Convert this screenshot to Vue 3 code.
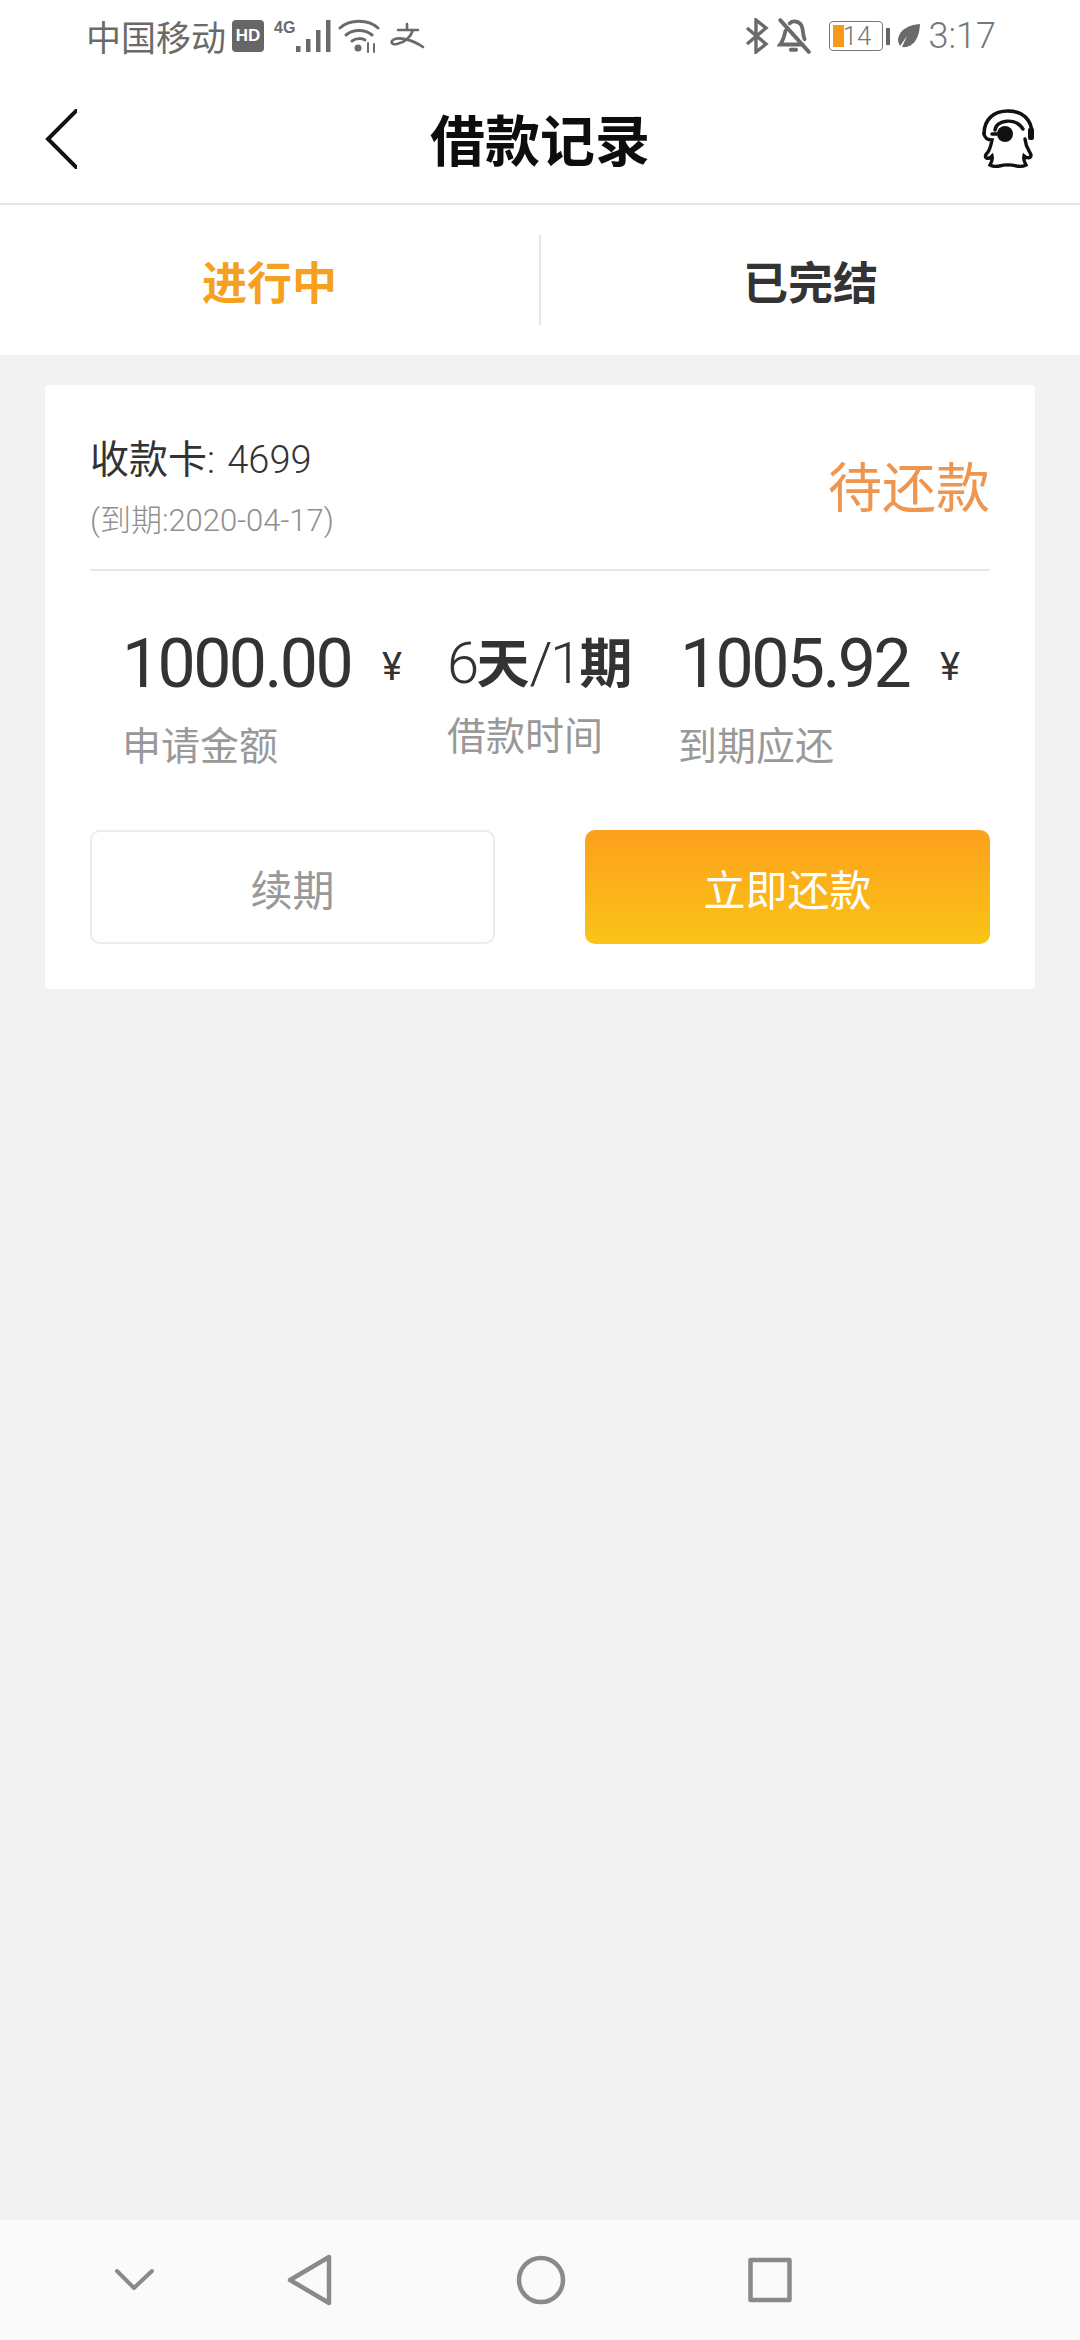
<script setup>
const stats = [
  { value: "1000.00", label: "申请金额" },
  { value: "1005.92", label: "到期应还" },
];
</script>

<template>
  <div class="page">
    <div class="status">
      <div class="status-left">
        <span class="carrier">中国移动</span>
        <span class="hd">HD</span>
        <span class="net">4G</span>
        <svg class="signal" width="38" height="34" viewBox="0 0 38 34">
          <rect x="1" y="27" width="4.5" height="6" fill="#6a6a6a" />
          <rect x="11" y="20" width="4.5" height="13" fill="#6a6a6a" />
          <rect x="21" y="11" width="4.5" height="22" fill="#6a6a6a" />
          <rect x="31" y="1" width="4.5" height="32" fill="#6a6a6a" />
        </svg>
        <svg class="wifi" width="42" height="34" viewBox="0 0 42 34" fill="none" stroke="#6a6a6a" stroke-width="3" stroke-linecap="round">
          <path d="M2 9C12 0 30 0 40 9" />
          <path d="M8 16C15 10 27 10 34 16" />
          <path d="M14 22C18 19 24 19 27 21" />
          <circle cx="20" cy="29" r="3.5" fill="#6a6a6a" stroke="none" />
          <path d="M30 24v9M36 25v8" stroke-width="2" />
        </svg>
        <svg class="alipay" width="36" height="28" viewBox="0 0 36 28" fill="none" stroke="#6a6a6a" stroke-width="2.6" stroke-linecap="round">
          <path d="M9 8H29M18 2V8M24 8C22 14 17 20 8 22C3 23 1 20 4 18C9 14 24 18 34 25" />
        </svg>
      </div>
      <div class="status-right">
        <svg width="24" height="36" viewBox="0 0 24 36" fill="none" stroke="#6a6a6a" stroke-width="3.4">
          <path d="M2 10L21 26L11 34V2L21 10L2 26" />
        </svg>
        <svg class="bell" width="34" height="36" viewBox="0 0 32 34" fill="none" stroke="#6a6a6a" stroke-width="3.6" stroke-linecap="round">
          <path d="M8 12C7 17 6 21 3 25H24M12 5C15 2 21 3 23 7C25 11 24 16 26 20" />
          <path d="M3 2L30 32" />
          <path d="M13 30H18" />
        </svg>
        <div class="battery">
          <i class="battery-fill"></i>
          <span>14</span>
        </div>
        <i class="battery-cap"></i>
        <svg class="leaf" width="24" height="26" viewBox="0 0 24 26">
          <path d="M23 1C12 2 3 6 1 16C1 19 2 21 3 23L10 13L5 24C12 25 22 21 23 1Z" fill="#6a6a6a" />
        </svg>
        <span class="time">3:17</span>
      </div>
    </div>

    <header class="header">
      <svg class="back" width="33" height="60" viewBox="0 0 33 60" fill="none" stroke="#111" stroke-width="4">
        <path d="M36 -2L4 30L36 62" />
      </svg>
      <h1>借款记录</h1>
      <svg class="service" width="54" height="60" viewBox="0 0 54 60" fill="none" stroke="#111" stroke-width="3.4" stroke-linecap="round">
        <path d="M3 25C3 10 13 2 27 2C41 2 51 10 51 25" stroke-width="3.6" />
        <rect x="47" y="19" width="6" height="12" rx="2" fill="#111" stroke="none" />
        <path d="M3 25C4 30 8 31 11 31C10 36 9 40 7 43C3 47 4 50 8 49C9 49 10 48 11 47C12 51 10 54 9 56C16 60 20 55 27 56C33 55 38 60 45 56C44 54 42 51 43 47C45 49 50 50 50 46C49 42 45 40 44 30" />
        <path d="M14 21C15 11 34 8 42 20" />
        <circle cx="24" cy="25" r="8" fill="#111" stroke="none" />
        <path d="M11 25H16" />
      </svg>
    </header>

    <nav class="tabs">
      <div class="tab active">进行中</div>
      <i class="tab-line"></i>
      <div class="tab">已完结</div>
    </nav>

    <main class="content">
      <section class="card">
        <div class="card-top">
          <div>
            <div class="card-no">收款卡<span class="thin">: 4699</span></div>
            <div class="due">(到期:2020-04-17)</div>
          </div>
          <div class="state">待还款</div>
        </div>

        <div class="stats">
          <div class="stat first">
            <div class="value"><span>{{ stats[0].value }}</span><small>¥</small></div>
            <div class="label">{{ stats[0].label }}</div>
          </div>
          <div class="stat middle">
            <div class="value period">6<b>天</b>/1<b>期</b></div>
            <div class="label">借款时间</div>
          </div>
          <div class="stat last">
            <div class="value"><span>{{ stats[1].value }}</span><small>¥</small></div>
            <div class="label">{{ stats[1].label }}</div>
          </div>
        </div>

        <div class="actions">
          <button class="btn ghost">续期</button>
          <button class="btn primary">立即还款</button>
        </div>
      </section>
    </main>

    <footer class="navbar">
      <svg class="nav-down" width="42" height="24" viewBox="0 0 42 24" fill="none" stroke="#8a8a8a" stroke-width="4" stroke-linecap="round" stroke-linejoin="round">
        <path d="M3 3L20 20L38 3" />
      </svg>
      <svg class="nav-back" width="46" height="52" viewBox="0 0 46 52" fill="none" stroke="#8a8a8a" stroke-width="4.5" stroke-linejoin="round">
        <path d="M42 3V49L3 26Z" />
      </svg>
      <svg class="nav-home" width="50" height="50" viewBox="0 0 50 50" fill="none" stroke="#8a8a8a" stroke-width="4.5">
        <circle cx="25" cy="25" r="22" />
      </svg>
      <svg class="nav-recent" width="44" height="46" viewBox="0 0 44 46" fill="none" stroke="#8a8a8a" stroke-width="4.5" stroke-linejoin="round">
        <rect x="2.5" y="3" width="39" height="40" />
      </svg>
    </footer>
  </div>
</template>

<style scoped>
.page {
  width: 1080px;
  height: 2340px;
  display: flex;
  flex-direction: column;
  background: #f2f2f2;
  font-family: "Noto Sans CJK SC", "Noto Sans", sans-serif;
  color: #333;
  overflow: hidden;
}

.status {
  height: 72px;
  background: #fff;
  display: flex;
  align-items: center;
  justify-content: space-between;
  padding: 0 84px 0 86px;
  color: #6a6a6a;
  flex: none;
}
.status-left,
.status-right {
  display: flex;
  align-items: center;
}
.carrier {
  font-size: 35px;
  line-height: 40px;
}
.hd {
  width: 32px;
  height: 32px;
  margin-left: 6px;
  border-radius: 4px;
  background: #666;
  color: #fff;
  font: bold 17px/32px "Liberation Sans", sans-serif;
  text-align: center;
}
.net {
  align-self: flex-start;
  margin: 4px 0 0 10px;
  width: 20px;
  font: bold 16px/16px "Liberation Sans", sans-serif;
}
.signal {
  margin-left: 1px;
}
.wifi {
  margin-left: 5px;
}
.alipay {
  margin-left: 9px;
}
.bell {
  margin-left: 8px;
}
.battery {
  position: relative;
  width: 54px;
  height: 30px;
  margin-left: 18px;
  border: 1.5px solid #777;
  border-radius: 4px;
  box-sizing: border-box;
  font: 300 26px/28px Roboto, sans-serif;
  color: #777;
  text-align: right;
  padding-right: 10px;
}
.battery-fill {
  position: absolute;
  left: 3px;
  top: 3px;
  bottom: 3px;
  width: 11px;
  background: #f59a1a;
}
.battery span {
  position: relative;
}
.battery-cap {
  width: 4px;
  height: 17px;
  margin-left: 3px;
  background: #666;
}
.leaf {
  margin-left: 7px;
}
.time {
  margin-left: 8px;
  font: 300 36px/40px Roboto, sans-serif;
  color: #777;
}

.header {
  height: 133px;
  box-sizing: border-box;
  background: #fff;
  border-bottom: 2px solid #e5e5e5;
  display: grid;
  grid-template-columns: 1fr auto 1fr;
  align-items: center;
  padding: 2px 45px 0;
  flex: none;
}
.back {
  margin-left: -1px;
}
.service {
  justify-self: end;
}
.header h1 {
  margin: 0 0 3px;
  font-size: 55px;
  font-weight: 700;
  color: #0d0d0d;
  line-height: 70px;
}

.tabs {
  height: 150px;
  background: #fff;
  display: flex;
  align-items: center;
  flex: none;
}
.tab {
  flex: 1;
  text-align: center;
  font-size: 45px;
  font-weight: 700;
  color: #333;
}
.tab.active {
  color: #f6a020;
}
.tab-line {
  width: 2px;
  height: 90px;
  background: #e6e6e6;
}

.content {
  flex: 1;
  padding: 30px 45px 0;
}
.card {
  background: #fff;
  border-radius: 4px;
  padding: 42px 45px 45px;
}
.card-top {
  display: flex;
  justify-content: space-between;
  align-items: center;
  padding-bottom: 26px;
  border-bottom: 2px solid #e6e6e6;
}
.card-no {
  font-size: 39px;
  line-height: 58px;
  color: #333;
}
.thin {
  font-family: Roboto, sans-serif;
  font-weight: 300;
  font-size: 38px;
  word-spacing: 3px;
}
.due {
  margin-top: 10px;
  font-family: Roboto, "Noto Sans CJK SC", sans-serif;
  font-weight: 300;
  font-size: 31px;
  line-height: 44px;
  color: #8f8f8f;
}
.state {
  font-size: 54px;
  color: #ee9550;
  line-height: 70px;
}

.stats {
  display: flex;
  margin-top: 48px;
}
.stat {
  flex: none;
}
.stat.first {
  width: 357px;
  padding-left: 32px;
  box-sizing: border-box;
}
.stat.middle {
  width: 233px;
}
.stat.last {
  width: 310px;
}
.value {
  font: 400 68px/84px Roboto, sans-serif;
  letter-spacing: -2.6px;
  color: #333;
  display: flex;
  align-items: center;
}
.value small {
  font-size: 38px;
  margin: 6px 0 0 31px;
  letter-spacing: 0;
}
.period {
  font-size: 58px;
  font-weight: 300;
  line-height: 82px;
  display: block;
}
.period b {
  font-family: "Noto Sans CJK SC", sans-serif;
  font-weight: 700;
  font-size: 53px;
  letter-spacing: 0;
}
.label {
  margin-top: 9px;
  font-size: 39px;
  line-height: 50px;
  color: #999;
}
.middle .label {
  margin-top: 4px;
}
.last .label {
  margin-left: -2px;
}

.actions {
  display: flex;
  justify-content: space-between;
  margin-top: 62px;
}
.btn {
  width: 405px;
  height: 114px;
  border-radius: 10px;
  font-family: inherit;
  font-size: 42px;
}
.ghost {
  background: #fff;
  border: 2px solid #ececec;
  color: #999;
}
.primary {
  border: 0;
  color: #fff;
  background: linear-gradient(#fda01c, #fac416);
}

.navbar {
  height: 120px;
  background: #fafafa;
  display: flex;
  align-items: center;
  flex: none;
  padding-left: 114px;
}
.nav-back {
  margin-left: 131px;
}
.nav-home {
  margin-left: 183px;
}
.nav-recent {
  margin-left: 182px;
}
</style>
